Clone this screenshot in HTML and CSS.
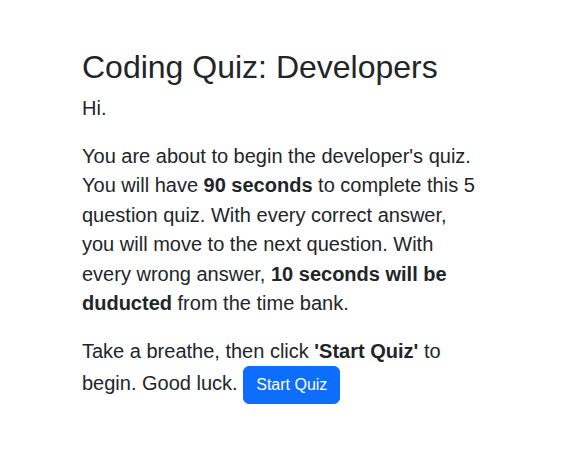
FILE: index.html
```html
<!DOCTYPE html>
<html lang="en">
<head>
<meta charset="utf-8">
<title>Coding Quiz</title>
<link rel="stylesheet" href="styles.css">
</head>
<body>
<main class="quiz">
  <h1 class="title">Coding Quiz: Developers</h1>
  <p class="lead">Hi.</p>
  <p class="lead">You are about to begin the developer's quiz. You will have <strong>90 seconds</strong> to complete this 5 question quiz. With every correct answer, you will move to the next question. With every wrong answer, <strong>10 seconds will be duducted</strong> from the time bank.</p>
  <p class="lead">Take a breathe, then click <strong>'Start Quiz'</strong> to begin. Good luck. <button class="btn" type="button">Start Quiz</button></p>
</main>
</body>
</html>
```
FILE: styles.css
```css
html, body {
  margin: 0;
  padding: 0;
  background: #fff;
}
body {
  font-family: "Liberation Sans", Arial, sans-serif;
  color: #212529;
  font-size: 16px;
  line-height: 1.5;
}
.quiz {
  margin: 0 90px 0 82px;
  padding-top: 48px;
}
.title {
  font-size: 32px;
  font-weight: 400;
  line-height: 1.2;
  margin: 0 0 8px;
}
.lead {
  font-size: 20px;
  line-height: 29.5px;
  margin: 0 0 18px;
}
.lead strong {
  font-weight: 700;
}
.btn {
  display: inline-block;
  font-family: inherit;
  font-size: 16px;
  line-height: 24px;
  padding: 6px 12px;
  border: 1px solid #0d6efd;
  border-radius: 6px;
  background: #0d6efd;
  color: #fff;
  vertical-align: middle;
  cursor: pointer;
}
```
